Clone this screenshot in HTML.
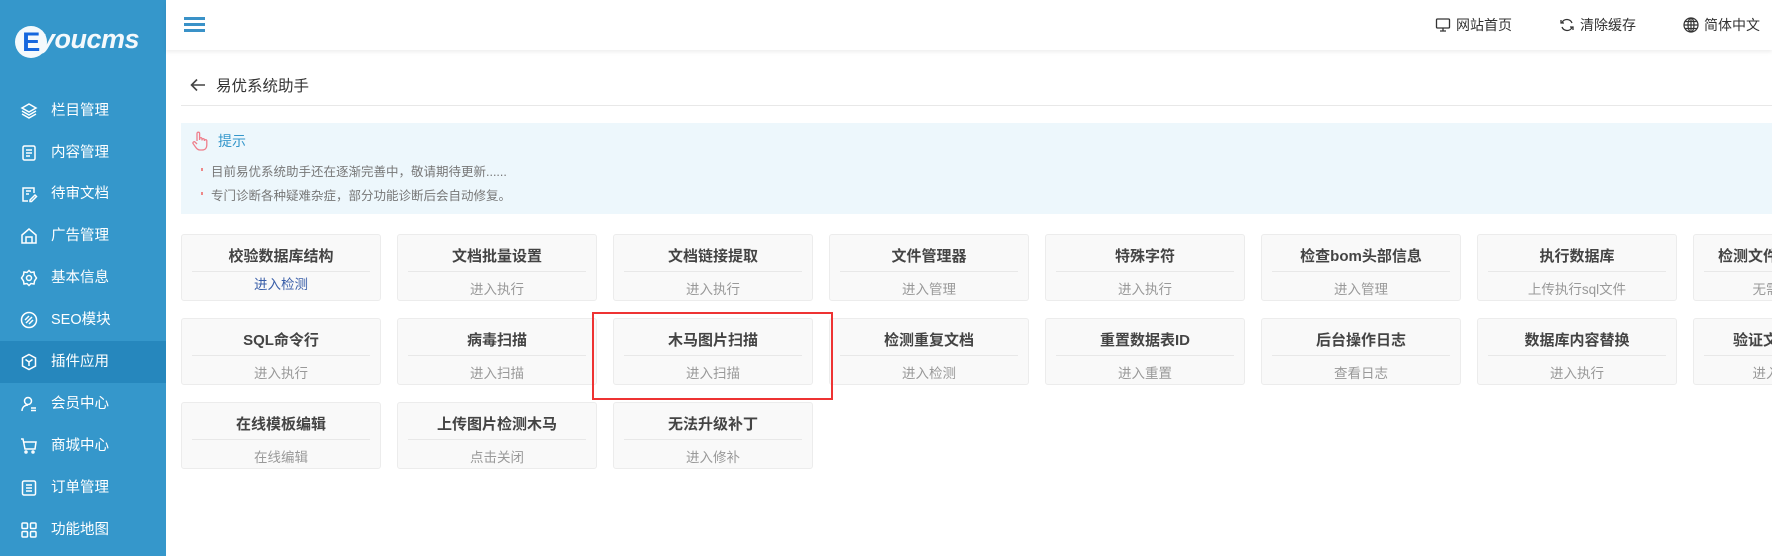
<!DOCTYPE html>
<html><head><meta charset="utf-8"><style>
*{margin:0;padding:0;box-sizing:border-box}
html,body{width:1772px;height:556px;overflow:hidden}
body{background:#fff;font-family:"Liberation Sans","Noto Sans CJK SC",sans-serif}
#wrap{position:relative;width:1772px;height:556px;overflow:hidden}
.side{position:absolute;left:0;top:0;width:166px;height:556px;background:#3597cb}
.logo{position:absolute;left:15px;top:24px;color:#fff;font-size:27px;font-style:italic;font-weight:bold;letter-spacing:-0.5px;opacity:.95}
.logo b{display:inline-block;width:32px;height:32px;border-radius:50%;background:#fff;color:#1565e0;text-align:center;line-height:32px;font-style:normal;font-size:27px;margin-right:-7px;vertical-align:-3px}
.item{position:absolute;left:0;width:166px;height:42px;color:#fff;font-size:14.5px;line-height:42px;padding-left:51px}
.item.act{background:#2687bd}
.item svg{position:absolute;left:20px;top:12px}
.hdr{position:absolute;left:166px;top:0;width:1606px;height:50px;background:#fff;box-shadow:0 2px 4px rgba(0,0,0,.07)}
.hb{position:absolute;left:18px;top:17px;width:21px;height:15px}
.hb i{display:block;height:3px;background:#3a92c8;margin-bottom:3px}
.hl{position:absolute;top:16px;font-size:14px;color:#333;line-height:18px}
.hl svg{position:absolute;left:-21px;top:1px}
.title{position:absolute;left:190px;top:74px;font-size:15.5px;color:#333}
.div{position:absolute;left:181px;width:1591px;top:105px;height:1px;background:#e8e8e8}
.tip{position:absolute;left:181px;width:1591px;top:123px;height:91px;background:#edf7fc}
.tip .h{position:absolute;left:37px;top:8px;color:#3597cb;font-size:14px}
.tip p{position:absolute;left:30px;font-size:12.5px;color:#777}
.tip p:before{content:"";position:absolute;left:-10px;top:7px;width:2px;height:3px;background:#e88}
.card{position:absolute;width:200px;height:67px;background:#f9f9f9;border:1px solid #ececec;border-radius:3px;text-align:center;white-space:nowrap;overflow:hidden}
.card .t{position:absolute;left:10px;right:10px;top:10px;height:27px;border-bottom:1px solid #e8e8e8;font-size:15px;font-weight:bold;color:#444}
.card .s{position:absolute;left:0;right:0;top:43px;font-size:13.5px;color:#999}
.red{position:absolute;left:592px;top:312px;width:241px;height:88px;border:2px solid #ee3333}
</style></head><body><div id="wrap">
<div class="side">
<div class="logo"><b>E</b>youcms</div>
<div class="item" style="top:90px"><svg width="18" height="18" viewBox="0 0 18 18" fill="none" stroke="#fff" stroke-width="1.5"><path d="M9 2L16 6L9 10L2 6Z"/><path d="M2 9L9 13L16 9"/><path d="M2 12L9 16L16 12"/></svg>栏目管理</div>
<div class="item" style="top:132px"><svg width="18" height="18" viewBox="0 0 18 18" fill="none" stroke="#fff" stroke-width="1.5"><rect x="3" y="2" width="12" height="14" rx="1.5"/><path d="M6 6H12M6 9H12M6 12H10"/></svg>内容管理</div>
<div class="item" style="top:173px"><svg width="18" height="18" viewBox="0 0 18 18" fill="none" stroke="#fff" stroke-width="1.5"><path d="M14 8V3H3V16H8"/><path d="M6 6H11M6 9H9"/><path d="M10 15L15 10L16.5 11.5L11.5 16.5H10Z"/></svg>待审文档</div>
<div class="item" style="top:215px"><svg width="18" height="18" viewBox="0 0 18 18" fill="none" stroke="#fff" stroke-width="1.5"><path d="M2 16V8L9 2L16 8V16Z"/><path d="M6 16V10H12V16"/></svg>广告管理</div>
<div class="item" style="top:257px"><svg width="18" height="18" viewBox="0 0 18 18" fill="none" stroke="#fff" stroke-width="1.5"><circle cx="9" cy="9" r="2.5"/><path d="M9 1.5L11 3.5L14 3L14.5 6L16.5 9L14.5 12L14 15L11 14.5L9 16.5L7 14.5L4 15L3.5 12L1.5 9L3.5 6L4 3L7 3.5Z"/></svg>基本信息</div>
<div class="item" style="top:299px"><svg width="18" height="18" viewBox="0 0 18 18" fill="none" stroke="#fff" stroke-width="1.5"><circle cx="9" cy="9" r="7.5"/><path d="M6 12L12 6M5 9L9 5M9 13L13 9"/></svg>SEO模块</div>
<div class="item act" style="top:341px"><svg width="18" height="18" viewBox="0 0 18 18" fill="none" stroke="#fff" stroke-width="1.5"><path d="M9 1.5L15.5 5V13L9 16.5L2.5 13V5Z"/><path d="M5.5 6.5L9 9L12.5 6.5M9 9V13"/></svg>插件应用</div>
<div class="item" style="top:383px"><svg width="18" height="18" viewBox="0 0 18 18" fill="none" stroke="#fff" stroke-width="1.5"><circle cx="8" cy="6" r="3.5"/><path d="M2 16C2 12 5 10 8 10"/><path d="M11 13H16M11 15.5H16"/></svg>会员中心</div>
<div class="item" style="top:425px"><svg width="18" height="18" viewBox="0 0 18 18" fill="none" stroke="#fff" stroke-width="1.5"><path d="M1 2H3L5 12H15L16 5H4"/><circle cx="6" cy="15" r="1"/><circle cx="13" cy="15" r="1"/></svg>商城中心</div>
<div class="item" style="top:467px"><svg width="18" height="18" viewBox="0 0 18 18" fill="none" stroke="#fff" stroke-width="1.5"><rect x="2.5" y="2" width="13" height="14" rx="1.5"/><path d="M6 6H12M6 9H12M6 12H12"/></svg>订单管理</div>
<div class="item" style="top:509px"><svg width="18" height="18" viewBox="0 0 18 18" fill="none" stroke="#fff" stroke-width="1.5"><rect x="2" y="2" width="5.5" height="5.5" rx="1"/><rect x="10.5" y="2" width="5.5" height="5.5" rx="1"/><rect x="2" y="10.5" width="5.5" height="5.5" rx="1"/><rect x="10.5" y="10.5" width="5.5" height="5.5" rx="1"/></svg>功能地图</div>
</div>
<div class="hdr">
<div class="hb"><i></i><i></i><i></i></div>
<div class="hl" style="left:1290px"><svg width="16" height="16" viewBox="0 0 16 16" fill="none" stroke="#333" stroke-width="1.3"><rect x="1.5" y="2" width="13" height="9" rx="1"/><path d="M5 14H11M8 11V14"/></svg>网站首页</div>
<div class="hl" style="left:1414px"><svg width="16" height="16" viewBox="0 0 16 16" fill="none" stroke="#333" stroke-width="1.3"><path d="M13 6A5.5 5.5 0 0 0 3 5.5M3 10A5.5 5.5 0 0 0 13 10.5"/><path d="M2 3V6H5M14 13V10H11"/></svg>清除缓存</div>
<div class="hl" style="left:1538px"><svg width="16" height="16" viewBox="0 0 16 16" fill="none" stroke="#333" stroke-width="1.2"><circle cx="8" cy="8" r="7"/><ellipse cx="8" cy="8" rx="3" ry="7"/><path d="M1 8H15M8 1V15M2 4.5H14M2 11.5H14"/></svg>简体中文</div>
</div>
<div class="title"><svg width="16" height="14" viewBox="0 0 16 14" fill="none" stroke="#444" stroke-width="1.6" style="vertical-align:-1px;margin-right:10px"><path d="M15 7H2M7 1.5L1.5 7L7 12.5"/></svg>易优系统助手</div>
<div class="div"></div>
<div class="tip">
<svg style="position:absolute;left:10px;top:8px" width="18" height="20" viewBox="0 0 18 20" fill="none" stroke="#ef7f8c" stroke-width="1.3"><path d="M6 10V2.5A1.3 1.3 0 0 1 8.6 2.5V9M8.6 7.5A1.3 1.3 0 0 1 11 7.5V9.5M11 8.5A1.3 1.3 0 0 1 13.4 8.5V10M13.4 9.5A1.3 1.3 0 0 1 15.8 9.5V14C15.8 17 14 19 11 19H9C7 19 5.5 17.5 4.5 16L2 12.5A1.3 1.3 0 0 1 4 11L6 13"/></svg>
<div class="h">提示</div>
<p style="top:38px">目前易优系统助手还在逐渐完善中，敬请期待更新......</p>
<p style="top:62px">专门诊断各种疑难杂症，部分功能诊断后会自动修复。</p>
</div>
<div class="card" style="left:181px;top:234px"><div class="t">校验数据库结构</div><div class="s" style="color:#3a5ea8;top:38px">进入检测</div></div>
<div class="card" style="left:397px;top:234px"><div class="t">文档批量设置</div><div class="s">进入执行</div></div>
<div class="card" style="left:613px;top:234px"><div class="t">文档链接提取</div><div class="s">进入执行</div></div>
<div class="card" style="left:829px;top:234px"><div class="t">文件管理器</div><div class="s">进入管理</div></div>
<div class="card" style="left:1045px;top:234px"><div class="t">特殊字符</div><div class="s">进入执行</div></div>
<div class="card" style="left:1261px;top:234px"><div class="t">检查bom头部信息</div><div class="s">进入管理</div></div>
<div class="card" style="left:1477px;top:234px"><div class="t">执行数据库</div><div class="s">上传执行sql文件</div></div>
<div class="card" style="left:1693px;top:234px"><div class="t">检测文件是否存在篡改</div><div class="s">无需进入执行</div></div>
<div class="card" style="left:181px;top:318px"><div class="t">SQL命令行</div><div class="s">进入执行</div></div>
<div class="card" style="left:397px;top:318px"><div class="t">病毒扫描</div><div class="s">进入扫描</div></div>
<div class="card" style="left:613px;top:318px"><div class="t">木马图片扫描</div><div class="s">进入扫描</div></div>
<div class="card" style="left:829px;top:318px"><div class="t">检测重复文档</div><div class="s">进入检测</div></div>
<div class="card" style="left:1045px;top:318px"><div class="t">重置数据表ID</div><div class="s">进入重置</div></div>
<div class="card" style="left:1261px;top:318px"><div class="t">后台操作日志</div><div class="s">查看日志</div></div>
<div class="card" style="left:1477px;top:318px"><div class="t">数据库内容替换</div><div class="s">进入执行</div></div>
<div class="card" style="left:1693px;top:318px"><div class="t">验证文件是否完整</div><div class="s">进入检测执行</div></div>
<div class="card" style="left:181px;top:402px"><div class="t">在线模板编辑</div><div class="s">在线编辑</div></div>
<div class="card" style="left:397px;top:402px"><div class="t">上传图片检测木马</div><div class="s">点击关闭</div></div>
<div class="card" style="left:613px;top:402px"><div class="t">无法升级补丁</div><div class="s">进入修补</div></div>
<div class="red"></div>
</div></body></html>
